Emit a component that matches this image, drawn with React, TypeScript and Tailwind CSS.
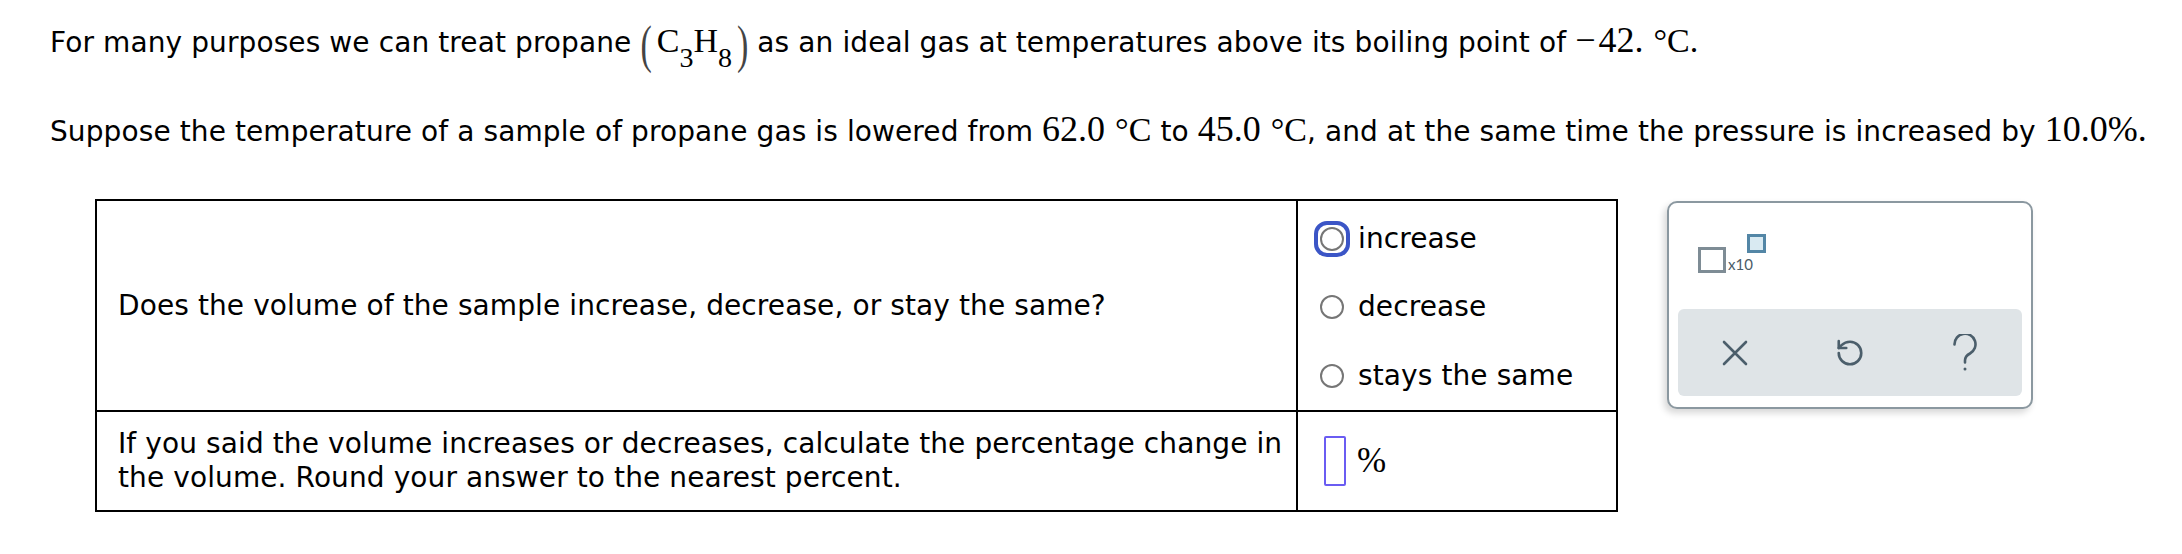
import React from "react";

function Serif({ children }: { children: React.ReactNode }) {
  return <span className="font-['Liberation_Serif',serif] text-[36px] leading-none tracking-normal">{children}</span>;
}

function Deg({ children, gap }: { children: React.ReactNode; gap: string }) {
  return <span className={gap + " text-[34px]"}>{children}</span>;
}

function Formula() {
  return (
    <span className="font-['Liberation_Serif',serif] text-[34px] leading-none whitespace-nowrap tracking-normal">
      <span className="inline-block scale-y-[1.55] text-[34px] font-light text-[#444] align-[-4px] mr-[5px]">(</span>
      C<span className="text-[28px] align-[-15px] leading-none">3</span>
      H<span className="text-[28px] align-[-15px] leading-none">8</span>
      <span className="inline-block scale-y-[1.55] text-[34px] font-light text-[#444] align-[-4px] ml-[5px]">)</span>
    </span>
  );
}

function Radio({ label, focused }: { label: string; focused?: boolean }) {
  return (
    <div className="h-[69px] flex items-center">
      <span
        className={
          focused
            ? "w-[36px] h-[36px] rounded-[13px] border-[4px] border-[#3b55c6] flex items-center justify-center"
            : "w-[36px] h-[36px] rounded-[13px] border-[4px] border-transparent flex items-center justify-center"
        }
      >
        <span className="w-[24px] h-[24px] rounded-full border-2 border-[#767676] bg-white" />
      </span>
      <span className="ml-[8px]">{label}</span>
    </div>
  );
}

export default function App() {
  return (
    <div className="w-[2182px] h-[554px] bg-white text-black font-['DejaVu_Sans',sans-serif] text-[28px] tracking-[0.1px] overflow-hidden">
      <div className="pl-[50px] pt-[18px] h-[68px] leading-[50px] whitespace-nowrap">
        For many purposes we can treat propane <Formula /> as an ideal gas at temperatures above its boiling point of{" "}
        <Serif>
          −<span className="ml-[3px]">42.</span>
          <Deg gap="ml-[10px]">°C.</Deg>
        </Serif>
      </div>
      <div className="pl-[50px] mt-[39px] h-[50px] leading-[50px] whitespace-nowrap">
        Suppose the temperature of a sample of propane gas is lowered from{" "}
        <Serif>
          62.0<Deg gap="ml-[10px]">°C</Deg>
        </Serif>{" "}
        to{" "}
        <Serif>
          45.0<Deg gap="ml-[10px]">°C</Deg>
        </Serif>
        , and at the same time the pressure is increased by <Serif>10.0%.</Serif>
      </div>
      <div className="flex items-start pl-[95px] mt-[42px] gap-[49px]">
        <div className="w-[1523px] border-2 border-black">
          <div className="flex h-[209px]">
            <div className="w-[1199px] flex items-center pl-[21px]">
              Does the volume of the sample increase, decrease, or stay the same?
            </div>
            <div className="flex-1 border-l-2 border-black pl-[16px] pt-[4px] flex flex-col">
              <Radio label="increase" focused />
              <Radio label="decrease" />
              <Radio label="stays the same" />
            </div>
          </div>
          <div className="flex h-[100px] border-t-2 border-black">
            <div className="w-[1199px] flex flex-col justify-center pl-[21px] leading-[34px] whitespace-nowrap">
              <span>If you said the volume increases or decreases, calculate the percentage change in</span>
              <span>the volume. Round your answer to the nearest percent.</span>
            </div>
            <div className="flex-1 border-l-2 border-black pl-[26px] flex items-center">
              <span className="w-[22px] h-[50px] border-2 border-[#6a5cf2] rounded-[2px]" />
              <span className="ml-[11px] font-['Liberation_Serif',serif] text-[35px]">%</span>
            </div>
          </div>
        </div>
        <div className="mt-[2px] w-[366px] h-[208px] border-2 border-[#8b98a0] rounded-[10px] p-[9px] flex flex-col bg-white shadow-[-3px_4px_7px_rgba(0,0,0,0.16)]">
          <div className="h-[97px] flex items-start pl-[20px] pt-[22px]">
            <div className="mt-[13px] w-[28px] h-[26px] border-[3px] border-[#7e8c95]" />
            <span className="mt-[23px] ml-[2px] text-[15px] leading-none tracking-normal font-['Lato',sans-serif] text-[#4a5c68]">x10</span>
            <div className="ml-[-6px] w-[19px] h-[19px] border-[3px] border-[#5386a6] bg-[#d9eaf2]" />
          </div>
          <div className="h-[87px] w-full bg-[#dfe4e7] rounded-[6px] grid grid-cols-3 items-center justify-items-center">
            <svg width="26" height="26" viewBox="0 0 26 26" fill="none" stroke="#4b5e6b" strokeWidth="2.6" strokeLinecap="round">
              <path d="M2 2L24 24M24 2L2 24" />
            </svg>
            <svg width="30" height="30" viewBox="0 0 24 24" fill="none" stroke="#4b5e6b" strokeWidth="2.1" strokeLinecap="round" strokeLinejoin="round">
              <path d="M3 12a9 9 0 1 0 9-9 9.75 9.75 0 0 0-6.74 2.74L3 8" />
              <path d="M3 2.5v5.5h6" />
            </svg>
            <svg width="26" height="38" viewBox="0 0 26 38" fill="none" stroke="#4b5e6b" strokeWidth="2.6" strokeLinecap="round">
              <path d="M2.5 10.5A10.5 10.5 0 1 1 18 19.5C14.5 21.3 13 23.5 13 26.5V28.5" />
              <circle cx="13" cy="35" r="1.5" fill="#4b5e6b" stroke="none" />
            </svg>
          </div>
        </div>
      </div>
    </div>
  );
}
